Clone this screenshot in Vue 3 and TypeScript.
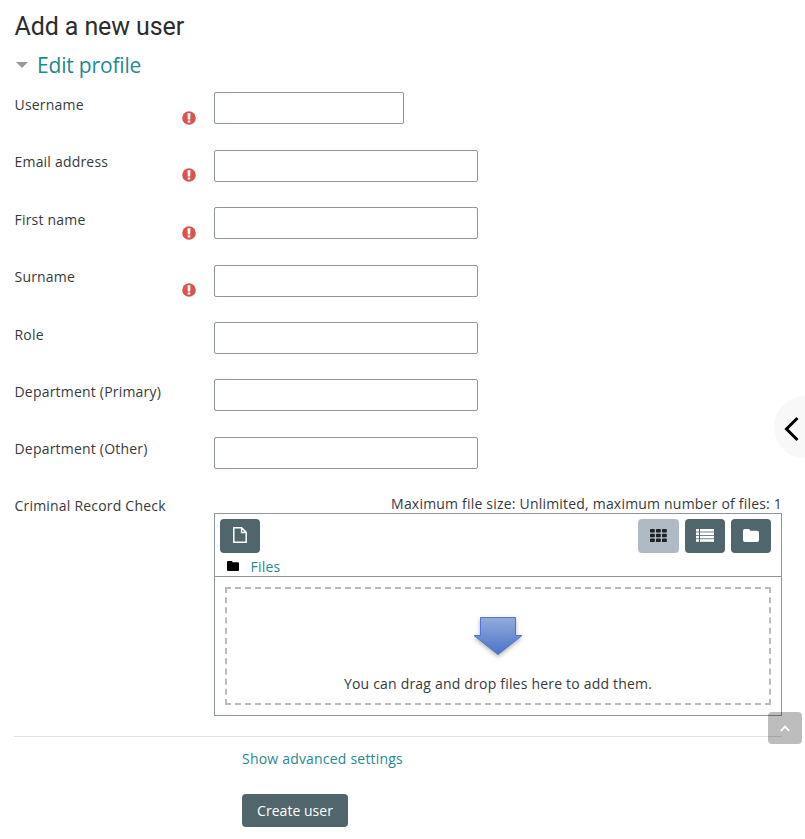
<script setup lang="ts">
import { ref } from 'vue'

interface Field {
  id: string
  label: string
  required: boolean
  short?: boolean
}

const fields: Field[] = [
  { id: 'username', label: 'Username', required: true, short: true },
  { id: 'email', label: 'Email address', required: true },
  { id: 'firstname', label: 'First name', required: true },
  { id: 'surname', label: 'Surname', required: true },
  { id: 'role', label: 'Role', required: false },
  { id: 'dept1', label: 'Department (Primary)', required: false },
  { id: 'dept2', label: 'Department (Other)', required: false },
]
const values = ref<Record<string, string>>({})
</script>

<template>
  <main class="page">
    <h2 class="title">Add a new user</h2>
    <h3 class="section">
      <svg class="caret" width="12" height="6" viewBox="0 0 12 6"><path d="M0 0H12L6 6Z" fill="#999" /></svg>
      <a>Edit profile</a>
    </h3>
    <form @submit.prevent>
      <div v-for="f in fields" :key="f.id" class="row">
        <label class="label" :for="f.id">{{ f.label }}</label>
        <span class="mark">
          <svg v-if="f.required" width="14" height="14" viewBox="0 0 14 14">
            <circle cx="7" cy="7" r="6.8" fill="#d9534f" />
            <path d="M5.5 2.2H8.5L8.2 8.4H5.8Z M5.7 9.4H8.3V11.6H5.7Z" fill="#fff" />
          </svg>
        </span>
        <input :id="f.id" v-model="values[f.id]" class="input" :class="{ short: f.short }" type="text" />
      </div>

      <div class="filerow">
        <span class="label">Criminal Record Check</span>
        <div class="files">
          <div class="limits">Maximum file size: Unlimited, maximum number of files: 1</div>
          <div class="manager">
            <div class="tools">
              <button class="tool" type="button">
                <svg width="14" height="16" viewBox="0 0 14 16" fill="none" stroke="#fff" stroke-width="1.5"><path d="M.8.8H8.6L13.2 5.4V15.2H.8Z M8.6 .8V5.4H13.2" /></svg>
              </button>
              <div class="views">
                <button class="tool active" type="button">
                  <svg width="17" height="13" viewBox="0 0 17 13" fill="#1d2125">
                    <template v-for="r in 3" :key="r">
                      <rect v-for="c in 3" :key="c" :x="(c - 1) * 6" :y="(r - 1) * 4.8" width="4.8" height="3.5" rx=".7" />
                    </template>
                  </svg>
                </button>
                <button class="tool" type="button">
                  <svg width="18" height="13" viewBox="0 0 18 13" fill="#fff">
                    <template v-for="r in 4" :key="r">
                      <rect x="0" :y="(r - 1) * 3.4" width="3" height="2.6" />
                      <rect x="4" :y="(r - 1) * 3.4" width="14" height="2.6" />
                    </template>
                  </svg>
                </button>
                <button class="tool" type="button">
                  <svg width="16" height="13" viewBox="0 0 16 13" fill="#fff"><path d="M1.8 0H5.5Q7.2 0 7.2 1.8H14Q16 1.8 16 3.8V11Q16 13 14 13H2Q0 13 0 11V2Q0 0 1.8 0Z" /></svg>
                </button>
              </div>
            </div>
            <div class="crumbs">
              <svg width="12" height="10" viewBox="0 0 12 10"><path d="M1 0H4.5Q5.5 0 5.5 1.3H11Q12 1.3 12 2.5V9Q12 10 11 10H1Q0 10 0 9V1Q0 0 1 0Z" /></svg>
              <a>Files</a>
            </div>
            <div class="content">
              <div class="drop">
                <svg class="arrow" width="62" height="48" viewBox="0 0 62 48">
                  <defs>
                    <linearGradient id="arrowFill" x1="0" y1="0" x2="0" y2="1">
                      <stop offset="0" stop-color="#93aadc" />
                      <stop offset="1" stop-color="#4d73c7" />
                    </linearGradient>
                  </defs>
                  <path d="M13.5 3.5H48.5V21.5H55L31 40.5L7 21.5H13.5Z" fill="url(#arrowFill)" stroke="#4d76cc" />
                </svg>
                <span>You can drag and drop files here to add them.</span>
              </div>
            </div>
          </div>
        </div>
      </div>

      <div class="footer">
        <a>Show advanced settings</a>
        <button class="create" type="submit">Create user</button>
      </div>
    </form>

    <button class="drawer" type="button" aria-label="Open drawer">
      <svg width="16" height="26" viewBox="0 0 16 26" fill="none" stroke="#000" stroke-width="3"><path d="M13.5 2L2.5 13L13.5 24" /></svg>
    </button>
    <button class="totop" type="button" aria-label="Back to top">
      <svg width="10" height="7" viewBox="0 0 10 7" fill="none" stroke="#fff" stroke-width="1.8"><path d="M.8 6L5 1.6L9.2 6" /></svg>
    </button>
  </main>
</template>

<style>
body {
  background: #fff;
}
</style>

<style scoped>
.page {
  position: relative;
  box-sizing: border-box;
  width: 805px;
  height: 839px;
  padding: 12px 23px 0 14px;
  overflow: hidden;
  font: 14px/21px "Open Sans", sans-serif;
  letter-spacing: 0.2px;
  color: #373a3c;
}
a {
  color: #1f8a91;
}
button {
  padding: 0;
  border: 0;
  font: inherit;
  letter-spacing: inherit;
}
svg {
  display: block;
}
.title {
  margin: 0;
  padding-left: 0.5px;
  font: 400 25px/30px Roboto, sans-serif;
  letter-spacing: -0.1px;
  color: #2d2d2d;
}
.section {
  display: flex;
  align-items: center;
  gap: 9px;
  height: 30px;
  margin: 8px 0 12.4px 2px;
  font-size: 21px;
  font-weight: 400;
  letter-spacing: -0.18px;
}
.row {
  display: flex;
  height: 57.4px;
}
.label {
  box-sizing: border-box;
  width: 166px;
  padding: 1.6px 0 0 0.5px;
  white-space: nowrap;
}
.mark {
  width: 34px;
  padding: 18.6px 0 0 1.6px;
  box-sizing: border-box;
}
.input {
  box-sizing: border-box;
  width: 264px;
  height: 32px;
  padding: 0 10px;
  border: 1px solid #8f959e;
  border-radius: 2px;
  background: #fff;
  font: inherit;
}
.input.short {
  width: 190px;
}
.filerow {
  display: flex;
}
.filerow .label {
  padding-top: 1px;
}
.files {
  width: 568px;
  margin-left: 34px;
}
.limits {
  height: 19px;
  line-height: 19px;
  text-align: right;
}
.manager {
  border: 1px solid #8f959e;
  height: 203px;
  box-sizing: border-box;
}
.tools {
  display: flex;
  justify-content: space-between;
  padding: 5px 10px 0 5px;
}
.views {
  display: flex;
  gap: 6px;
}
.tool {
  box-sizing: border-box;
  display: flex;
  align-items: center;
  justify-content: center;
  width: 40px;
  height: 34px;
  padding-bottom: 2px;
  border-radius: 4px;
  background: #51666c;
}
.tool.active {
  width: 41px;
  background: #afbac4;
}
.crumbs {
  display: flex;
  align-items: flex-start;
  gap: 11.5px;
  height: 23px;
  padding: 0 12px;
  border-bottom: 1px solid #8f959e;
}
.crumbs svg {
  margin-top: 8px;
}
.crumbs a {
  margin-top: 3px;
}
.content {
  padding: 10px;
}
.drop {
  display: flex;
  flex-direction: column;
  align-items: center;
  box-sizing: border-box;
  height: 118px;
  padding-top: 25px;
  border: 2px dashed #bbb;
}
.arrow {
  margin-bottom: 11px;
  filter: drop-shadow(0 2px 2px rgba(0, 0, 0, 0.3));
}
.footer {
  display: flex;
  flex-direction: column;
  align-items: flex-start;
  margin-top: 20px;
  padding: 11px 0 0 228px;
  border-top: 1px solid #dee2e6;
}
.create {
  width: 106px;
  height: 33px;
  margin-top: 25px;
  border-radius: 4px;
  background: #51666c;
  color: #fff;
  letter-spacing: 0.03px;
}
.drawer {
  position: absolute;
  top: 396px;
  left: 774px;
  width: 62px;
  height: 62px;
  padding: 4px 0 0 10px;
  border-radius: 50%;
  background: #f8f8f8;
}
.totop {
  position: absolute;
  top: 712px;
  left: 768px;
  display: flex;
  align-items: center;
  justify-content: center;
  width: 34px;
  height: 32px;
  border-radius: 4px;
  background: rgba(0, 0, 0, 0.26);
}
</style>
